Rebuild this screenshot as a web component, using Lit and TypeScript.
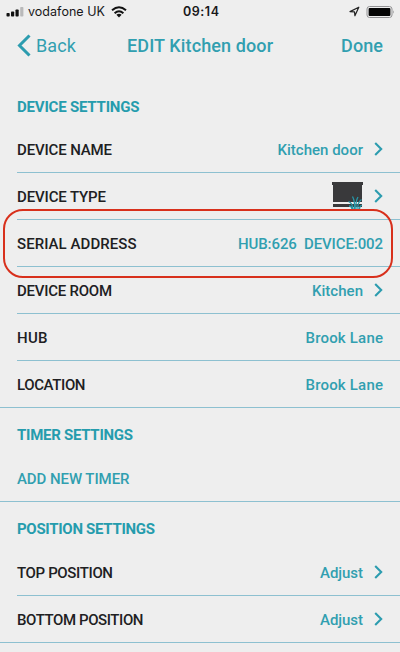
import { LitElement, html, css, svg, nothing } from "lit";
import { customElement, property } from "lit/decorators.js";

// A single line of text whose tracking is adjusted to fill a given width.
@customElement("fit-text")
class FitText extends LitElement {
  @property() text = "";
  @property({ type: Number }) width = 0;

  static styles = css`
    :host { display: inline-block; white-space: pre; }
    .t { display: inline-block; }
  `;

  updated() {
    const el = this.renderRoot.querySelector(".t") as HTMLElement;
    el.style.letterSpacing = "0px";
    el.style.marginRight = "0px";
    const gap = (this.width - el.getBoundingClientRect().width) / (this.text.length - 1);
    el.style.letterSpacing = gap + "px";
    el.style.marginRight = -gap + "px";
  }

  render() {
    return html`<span class="t">${this.text}</span>`;
  }
}

type Row = {
  label: string;
  w: number;
  value?: string;
  vw?: number;
  blind?: boolean;
  arrow?: boolean;
  action?: boolean;
  marked?: boolean;
};
type Section = { title: string; w: number; rows: Row[] };

const sections: Section[] = [
  {
    title: "DEVICE SETTINGS", w: 122.5,
    rows: [
      { label: "DEVICE NAME", w: 95, value: "Kitchen door", vw: 85.5, arrow: true },
      { label: "DEVICE TYPE", w: 89, blind: true, arrow: true },
      { label: "SERIAL ADDRESS", w: 119.5, value: "HUB:626  DEVICE:002", vw: 145, marked: true },
      { label: "DEVICE ROOM", w: 95, value: "Kitchen", vw: 51, arrow: true },
      { label: "HUB", w: 30.5, value: "Brook Lane", vw: 77.5 },
      { label: "LOCATION", w: 68.5, value: "Brook Lane", vw: 77.5 },
    ],
  },
  { title: "TIMER SETTINGS", w: 116, rows: [{ label: "ADD NEW TIMER", w: 112.5, action: true }] },
  {
    title: "POSITION SETTINGS", w: 138,
    rows: [
      { label: "TOP POSITION", w: 96, value: "Adjust", vw: 43, arrow: true },
      { label: "BOTTOM POSITION", w: 126.5, value: "Adjust", vw: 43, arrow: true },
    ],
  },
];

@customElement("app-root")
class AppRoot extends LitElement {
  static styles = css`
    :host {
      display: block;
      height: 652px;
      overflow: hidden;
      background: #eeeeee;
      color: #202022;
      font: 500 15px/20px Roboto, "Noto Sans", sans-serif;
    }
    svg { display: block; flex: none; }
    .status {
      box-sizing: border-box;
      display: grid;
      grid-template-columns: 1fr auto 1fr;
      align-items: center;
      height: 22px;
      padding: 1px 5px 0 6px;
      font: 400 12.5px/16px Inter, "Liberation Sans", sans-serif;
      color: #18181a;
    }
    .carrier { display: flex; align-items: center; }
    .carrier fit-text { margin: 0 6px 0 4px; }
    .time { font-weight: 600; margin-left: 1px; }
    .power { display: flex; justify-content: flex-end; align-items: center; gap: 6px; }
    .nav {
      display: grid;
      grid-template-columns: 1fr auto 1fr;
      align-items: center;
      height: 48px;
      padding: 0 17px;
      font-size: 18px;
      line-height: 24px;
      color: #319fb0;
    }
    .back { display: flex; align-items: center; gap: 5px; font-weight: 400; }
    .back svg { margin-top: -2px; }
    .done { text-align: right; }
    .title {
      box-sizing: border-box;
      height: 47px;
      padding: 17px 17px 0;
      color: #259cad;
      font-weight: 700;
    }
    .first { height: 56px; padding-top: 27px; }
    .row {
      position: relative;
      box-sizing: border-box;
      display: flex;
      align-items: center;
      justify-content: space-between;
      height: 47px;
      margin-left: 17px;
      padding: 2px 17px 0 0;
      border-bottom: 1px solid #8dc0d0;
    }
    .last { margin-left: 0; padding-left: 17px; }
    .action { color: #319fb0; }
    .value { display: flex; align-items: center; color: #319fb0; }
    .chevron { margin: -2px 0 0 11px; }
    .blind { margin: -5px -1px -2px 0; }
    .mark {
      position: absolute;
      z-index: 1;
      box-sizing: border-box;
      left: -14px;
      right: 7px;
      top: -11px;
      height: 69px;
      border: 2px solid #d8301c;
      border-radius: 20px;
    }
  `;

  private blind() {
    return svg`<svg class="blind" width="32" height="28" viewBox="0 0 32 28">
      <path fill="#39393b" d="M0 0H31V3H30V20H1V3H0ZM1 22H30V25H1Z"/>
      <g fill="none" stroke="#2797a8" stroke-width="1.3">
        <path d="M21 27Q20.5 21 16.5 19.5M22.5 27Q23 19 20.5 14.5M24 27Q23.5 19 26 15M26 27Q25 21 29.5 17.5M27.5 27Q27.5 24 30 23M20 27Q19.5 24 17 24"/>
      </g>
    </svg>`;
  }

  private row(r: Row, last: boolean) {
    return html`<div class="row ${last ? "last" : ""} ${r.action ? "action" : ""}">
      <fit-text .text=${r.label} .width=${r.w}></fit-text>
      <div class="value">
        ${r.value ? html`<fit-text .text=${r.value} .width=${r.vw!}></fit-text>` : nothing}
        ${r.blind ? this.blind() : nothing}
        ${r.arrow
          ? html`<svg class="chevron" width="9" height="14" viewBox="0 0 9 14">
              <path d="M1.2 1L7.2 7L1.2 13" fill="none" stroke="#2c9caf" stroke-width="2.1" />
            </svg>`
          : nothing}
      </div>
      ${r.marked ? html`<div class="mark"></div>` : nothing}
    </div>`;
  }

  render() {
    return html`
      <div class="status">
        <div class="carrier">
          <svg width="18" height="10" viewBox="0 0 18 10">
            <g fill="#111">
              <rect x=".5" y="6" width="3.2" height="3.5" rx=".8" />
              <rect x="5" y="4.5" width="3.2" height="5" rx=".8" />
              <rect x="9.5" y="2.5" width="3.2" height="7" rx=".8" />
            </g>
            <rect x="14.2" y="0" width="3.2" height="9.5" rx=".8" fill="#b9b9ba" />
          </svg>
          <fit-text .text=${"vodafone UK"} .width=${77}></fit-text>
          <svg width="16" height="12" viewBox="0 0 16 12">
            <g fill="none" stroke="#111" stroke-width="2">
              <path d="M1 4.3Q8 -1.7 15 4.3" />
              <path d="M3.6 7.2Q8 3.4 12.4 7.2" />
            </g>
            <path d="M5.4 8.8Q8 6.8 10.6 8.8L8 11.4Z" fill="#111" />
          </svg>
        </div>
        <fit-text class="time" .text=${"09:14"} .width=${36}></fit-text>
        <div class="power">
          <svg width="11" height="11" viewBox="0 0 11 11">
            <path d="M1 5.6L9.8 1.2L5.9 9.8L5.5 5.8Z" fill="none" stroke="#222" stroke-width="1.2" stroke-linejoin="round" />
          </svg>
          <svg width="29" height="12" viewBox="0 0 29 12">
            <rect x="1" y=".5" width="25" height="11" rx="2.5" fill="none" stroke="#929294" />
            <rect x="2.6" y="2" width="21.8" height="8" rx="1" fill="#050505" />
            <path d="M27.2 4.2Q28.8 6 27.2 7.8Z" fill="#929294" />
          </svg>
        </div>
      </div>
      <div class="nav">
        <div class="back">
          <svg width="14" height="23" viewBox="0 0 14 23">
            <path d="M12.5 1.5L2.5 11.5L12.5 21.5" fill="none" stroke="#2c9caf" stroke-width="3" />
          </svg>
          <fit-text .text=${"Back"} .width=${40}></fit-text>
        </div>
        <fit-text .text=${"EDIT Kitchen door"} .width=${146}></fit-text>
        <div class="done"><fit-text .text=${"Done"} .width=${42}></fit-text></div>
      </div>
      ${sections.map(
        (s, i) => html`
          <div class="title ${i === 0 ? "first" : ""}"><fit-text .text=${s.title} .width=${s.w}></fit-text></div>
          ${s.rows.map((r, j) => this.row(r, j === s.rows.length - 1))}
        `
      )}
    `;
  }
}
